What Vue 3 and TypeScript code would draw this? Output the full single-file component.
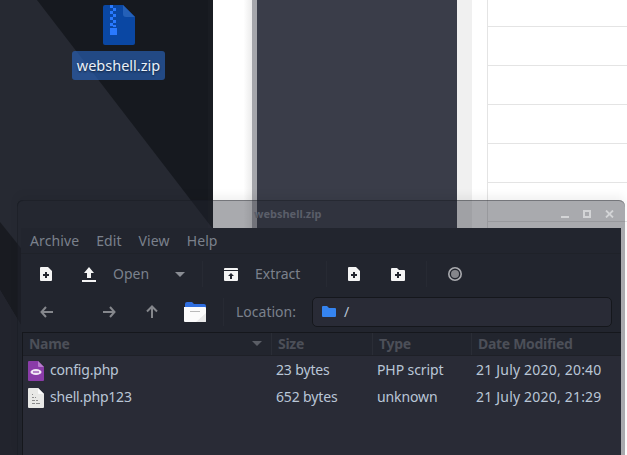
<script setup lang="ts">
interface FileRow { name: string; kind: 'php' | 'bin'; size: string; type: string; date: string }
const files: FileRow[] = [
  { name: 'config.php', kind: 'php', size: '23 bytes', type: 'PHP script', date: '21 July 2020, 20:40' },
  { name: 'shell.php123', kind: 'bin', size: '652 bytes', type: 'unknown', date: '21 July 2020, 21:29' },
]
const menus = ['Archive', 'Edit', 'View', 'Help']
const bars = [26, 65, 104, 143, 182, 221]
</script>

<template>
  <div class="desktop">
    <svg class="wall" width="213" height="455" viewBox="0 0 213 455">
      <polygon points="37,0 213,229 213,455 0,455 0,0" fill="#262932" />
      <polygon points="0,222 24,252 24,330 0,290" fill="#191b21" />
      <polygon points="0,290 24,330 24,455 0,455" fill="#22242d" />
    </svg>

    <div class="bg-window">
      <div class="bg-white"></div>
      <div class="bg-grey"></div>
      <div class="bg-dark"></div>
      <div class="bg-light"></div>
      <div class="bg-white2"></div>
      <div class="bg-table">
        <div v-for="y in bars" :key="y" class="bg-line" :style="{ top: y + 'px' }"></div>
      </div>
    </div>

    <div class="desk-icon">
      <svg width="32" height="40" viewBox="0 0 32 40">
        <path d="M2 0H20L32 12V38a2 2 0 0 1-2 2H2a2 2 0 0 1-2-2V2a2 2 0 0 1 2-2Z" fill="#0a47a3" />
        <path d="M20 0L32 12H23a3 3 0 0 1-3-3Z" fill="#2460b8" />
        <path d="M7 0h3v3H7ZM10 3h3v3h-3ZM7 6h3v3H7ZM10 9h3v3h-3ZM7 12h3v3H7ZM10 15h3v3h-3ZM7 18h3v3H7ZM10 20h3v2h-3ZM7 23h7v7H7Z" fill="#2979ff" />
      </svg>
      <span class="desk-label">webshell.zip</span>
    </div>

    <section class="win">
      <header class="title">
        <span class="title-text">webshell.zip</span>
        <div class="win-btns">
          <svg width="8" height="2" viewBox="0 0 8 2"><rect width="8" height="2" fill="#d3d4d6" /></svg>
          <svg width="8" height="8" viewBox="0 0 8 8"><path d="M0 0H8V8H0ZM2 2V6H6V2Z" fill="#d3d4d6" fill-rule="evenodd" /></svg>
          <svg width="9" height="8" viewBox="0 0 9 8"><path d="M1 0.5L8 7.5M8 0.5L1 7.5" stroke="#d3d4d6" stroke-width="1.8" /></svg>
        </div>
      </header>

      <div class="body">
        <nav class="menubar">
          <span v-for="m in menus" :key="m" class="menu">{{ m }}</span>
        </nav>

        <div class="toolbar">
          <span class="tool w-new">
            <svg width="12" height="14" viewBox="0 0 12 14"><path d="M1 0H8L12 4V13a1 1 0 0 1-1 1H1a1 1 0 0 1-1-1V1a1 1 0 0 1 1-1Z" fill="#f4f4f4" /><path d="M5 5H7V7H9V9H7V11H5V9H3V7H5Z" fill="#22252e" /></svg>
          </span>
          <span class="tool w-up">
            <svg width="14" height="15" viewBox="0 0 14 15"><path d="M7 0L12 6H9V11H5V6H2Z M0 13H14V15H0Z" fill="#f4f4f4" /></svg>
          </span>
          <span class="tool-label w-open">Open</span>
          <span class="tool w-caret"><svg width="10" height="5" viewBox="0 0 10 5"><path d="M0 0H10L5 5Z" fill="#8a8d94" /></svg></span>
          <span class="sep sep-a"></span>
          <span class="tool w-extract">
            <svg width="14" height="13" viewBox="0 0 14 13"><path d="M1 0H13a1 1 0 0 1 1 1V2H0V1a1 1 0 0 1 1-1ZM0 3H14V12a1 1 0 0 1-1 1H1a1 1 0 0 1-1-1Z" fill="#f4f4f4" /><path d="M7 5L10 8H8V11H6V8H4Z" fill="#22252e" /></svg>
          </span>
          <span class="tool-label w-extract-l">Extract</span>
          <span class="sep"></span>
          <span class="tool w-addf">
            <svg width="12" height="14" viewBox="0 0 12 14"><path d="M1 0H8L12 4V13a1 1 0 0 1-1 1H1a1 1 0 0 1-1-1V1a1 1 0 0 1 1-1Z" fill="#f4f4f4" /><path d="M5 5H7V7H9V9H7V11H5V9H3V7H5Z" fill="#22252e" /></svg>
          </span>
          <span class="tool w-addd">
            <svg width="14" height="13" viewBox="0 0 14 13"><path d="M1 0H6L8 2H13a1 1 0 0 1 1 1V12a1 1 0 0 1-1 1H1a1 1 0 0 1-1-1V1a1 1 0 0 1 1-1Z" fill="#f4f4f4" /><path d="M6 4H8V6H10V8H8V10H6V8H4V6H6Z" fill="#22252e" /></svg>
          </span>
          <span class="sep sep-c"></span>
          <span class="tool w-rec">
            <svg width="14" height="14" viewBox="0 0 14 14"><circle cx="7" cy="7" r="6.2" fill="none" stroke="#a9aaae" stroke-width="1.6" /><circle cx="7" cy="7" r="4" fill="#85868b" /></svg>
          </span>
        </div>

        <div class="locbar">
          <span class="tool w-back"><svg width="13" height="12" viewBox="0 0 13 12"><path d="M6 1L1.5 6L6 11M2 6H13" fill="none" stroke="#85878c" stroke-width="2" /></svg></span>
          <span class="tool w-fwd"><svg width="13" height="12" viewBox="0 0 13 12"><path d="M7 1L11.5 6L7 11M11 6H0" fill="none" stroke="#85878c" stroke-width="2" /></svg></span>
          <span class="tool w-upa"><svg width="12" height="13" viewBox="0 0 12 13"><path d="M1 6.5L6 1.5L11 6.5M6 2V13" fill="none" stroke="#85878c" stroke-width="2" /></svg></span>
          <span class="tool w-home">
            <svg width="22" height="20" viewBox="0 0 22 20"><path d="M1 2a2 2 0 0 1 2-2H8L10 2H20a2 2 0 0 1 2 2V8H1Z" fill="#2f6ee0" /><path d="M0 5H21a1 1 0 0 1 1 1V19a1 1 0 0 1-1 1H1a1 1 0 0 1-1-1Z" fill="#fbfbfb" /><path d="M22 11V19a1 1 0 0 1-1 1H12Z" fill="#e9e9e9" /><rect x="6" y="9" width="10" height="1" fill="#b9b9b9" /></svg>
          </span>
          <span class="sep sep-loc"></span>
          <span class="loc-label">Location:</span>
          <div class="entry">
            <svg width="14" height="11" viewBox="0 0 14 11"><path d="M1 0H5L7 2H13a1 1 0 0 1 1 1V10a1 1 0 0 1-1 1H1a1 1 0 0 1-1-1V1a1 1 0 0 1 1-1Z" fill="#3584f0" /></svg>
            <span class="entry-text">/</span>
          </div>
        </div>

        <div class="list">
          <div class="thead">
            <span class="th th-name">Name<svg width="10" height="5" viewBox="0 0 10 5"><path d="M0 0H10L5 5Z" fill="#5b5e66" /></svg></span>
            <span class="th th-size">Size</span>
            <span class="th th-type">Type</span>
            <span class="th th-date">Date Modified</span>
          </div>
          <div v-for="f in files" :key="f.name" class="row">
            <span class="td td-name">
              <svg v-if="f.kind === 'php'" width="16" height="20" viewBox="0 0 16 20"><path d="M1 0H10L16 6V19a1 1 0 0 1-1 1H1a1 1 0 0 1-1-1V1a1 1 0 0 1 1-1Z" fill="#8a3ca8" /><path d="M10 0L16 6H11a1 1 0 0 1-1-1Z" fill="#b77ccc" /><ellipse cx="8" cy="11" rx="5.5" ry="3" fill="#f2e8f5" /><rect x="5" y="10.4" width="6" height="1.2" fill="#8a3ca8" /></svg>
              <svg v-else width="16" height="20" viewBox="0 0 16 20"><path d="M1 0H10L16 6V19a1 1 0 0 1-1 1H1a1 1 0 0 1-1-1V1a1 1 0 0 1 1-1Z" fill="#e8e8e6" /><path d="M10 0L16 6H11a1 1 0 0 1-1-1Z" fill="#fafafa" /><path d="M4 6h1v1H4ZM4 9h2v1H4ZM7 9h1v1H7ZM4 12h3v1H4ZM8 12h2v1H8ZM4 15h3v1H4ZM8 15h4v1H8Z" fill="#8b8b8b" /></svg>
              <span>{{ f.name }}</span>
            </span>
            <span class="td td-size">{{ f.size }}</span>
            <span class="td td-type">{{ f.type }}</span>
            <span class="td td-date">{{ f.date }}</span>
          </div>
        </div>
      </div>
    </section>
  </div>
</template>

<style>
html, body { margin: 0; background: #16191f; overflow: hidden; }
</style>

<style scoped>
.desktop {
  position: relative;
  width: 627px;
  height: 455px;
  overflow: hidden;
  background: #16191f;
  font-family: "Noto Sans", sans-serif;
  font-size: 14px;
}
.wall { position: absolute; left: 0; top: 0; }
.bg-window {
  position: absolute;
  left: 213px;
  top: 0;
  right: 0;
  bottom: 0;
  display: flex;
  background: #fff;
  box-shadow: -5px 0 0 rgba(255, 255, 255, 0.015);
}
.bg-white { width: 39px; background: linear-gradient(90deg, #fff 78%, #ebebeb); }
.bg-grey { width: 5px; background: #a5a6ab; }
.bg-dark { width: 200px; background: #3a3d49; }
.bg-light { width: 15px; background: #f0f0f0; }
.bg-white2 { width: 15px; background: #fff; border-right: 1px solid #e4e4e4; }
.bg-table { position: relative; flex: 1; }
.bg-line { position: absolute; left: 0; right: 0; height: 1px; background: #e4e4e4; }

.desk-icon {
  position: absolute;
  left: 72px;
  top: 5px;
  width: 93px;
  display: flex;
  flex-direction: column;
  align-items: center;
  gap: 6px;
}
.desk-label {
  width: 93px;
  height: 29px;
  line-height: 28px;
  text-align: center;
  border-radius: 3px;
  background: rgba(42, 104, 196, 0.62);
  color: #e8f0fa;
  font-size: 14.5px;
  text-shadow: 0 1px 2px rgba(0, 0, 0, 0.6);
}

.win {
  position: absolute;
  left: 17px;
  top: 200px;
  width: 608px;
  height: 255px;
  box-sizing: border-box;
  padding: 0 4px;
  display: flex;
  flex-direction: column;
  background: rgba(34, 37, 46, 0.39);
  border-radius: 6px 6px 0 0;
  box-shadow: inset 0 1px 0 rgba(20, 22, 28, 0.35), inset 1px 0 0 rgba(20, 22, 28, 0.35), 0 -5px 8px rgba(0, 0, 0, 0.05);
}
.title {
  position: relative;
  height: 28px;
  flex: none;
}
.title-text {
  position: absolute;
  left: 233px;
  top: 5px;
  font-size: 11px;
  line-height: 17px;
  font-weight: 700;
  color: #5a5e69;
}
.win-btns {
  position: absolute;
  right: 7px;
  top: 10px;
  display: flex;
  align-items: flex-end;
  gap: 14px;
}
.body {
  flex: 1;
  min-height: 0;
  background: #22252e;
  display: flex;
  flex-direction: column;
}
.menubar {
  height: 26px;
  flex: none;
  display: flex;
  align-items: center;
  padding-left: 9px;
  gap: 17px;
  color: #7b818c;
  box-sizing: border-box;
  border-bottom: 1px solid #1f2229;
}
.menu { line-height: 26px; letter-spacing: 0.1px; }
.toolbar {
  height: 40px;
  flex: none;
  display: flex;
  align-items: center;
  padding-left: 1px;
  color: #7b818c;
}
.tool { display: flex; align-items: center; justify-content: center; flex: none; }
.tool svg { flex: none; }
.tool-label { flex: none; padding-bottom: 2px; }
.sep { width: 1px; height: 26px; background: #272a33; flex: none; }
.w-new { width: 48px; }
.w-up { width: 38px; }
.w-open { width: 51px; padding-left: 5px; box-sizing: border-box; }
.w-caret { width: 30px; margin-left: 6px; }
.sep-a { margin-left: 7px; }
.w-extract { width: 56px; }
.w-extract-l { width: 71px; margin-left: -4px; }
.w-addf { width: 54px; }
.w-addd { width: 34px; }
.sep-c { margin-left: 11px; }
.w-rec { width: 56px; }
.locbar {
  height: 35px;
  flex: none;
  display: flex;
  align-items: center;
  padding-left: 1px;
  color: #7b818c;
}
.w-back { width: 48px; }
.w-fwd { width: 34px; margin-left: 22px; }
.w-upa { width: 34px; margin-left: 9px; }
.w-home { width: 44px; margin-left: 4px; }
.sep-loc { height: 28px; margin-left: 6px; }
.loc-label { width: 76px; margin-left: 12px; flex: none; }
.entry {
  width: 300px;
  height: 30px;
  flex: none;
  box-sizing: border-box;
  display: flex;
  align-items: center;
  gap: 8px;
  padding-left: 9px;
  background: #292b36;
  border: 1px solid #15171c;
  border-radius: 5px;
  color: #b9c6d6;
}
.entry-text { line-height: 20px; }
.list {
  flex: 1;
  min-height: 0;
  margin-left: 1px;
  margin-top: 3px;
  background: #292b36;
  border-top: 1px solid #15171c;
  border-left: 1px solid #15171c;
}
.thead {
  display: grid;
  grid-template-columns: 249px 101px 99px 1fr;
  box-sizing: border-box;
  height: 23px;
  background: #22252e;
  border-bottom: 1px solid #1e2027;
}
.th {
  display: flex;
  align-items: center;
  justify-content: space-between;
  padding-left: 6px;
  padding-bottom: 1px;
  font-weight: 700;
  letter-spacing: -0.3px;
  color: #4c4f58;
  border-right: 1px solid #2a2d36;
}
.th-name svg { margin-right: 9px; }
.th-date { border-right: 0; }
.row {
  display: grid;
  grid-template-columns: 249px 101px 99px 1fr;
  height: 27px;
  color: #b9c6d6;
}
.td { display: flex; align-items: center; white-space: nowrap; }
.td-name { gap: 6px; padding-left: 5px; letter-spacing: -0.2px; }
.td-name svg { margin-top: 2px; }
.td-size { padding-left: 4px; letter-spacing: -0.15px; }
.td-type { padding-left: 4px; letter-spacing: -0.1px; }
.td-date { padding-left: 4px; letter-spacing: 0.2px; }
</style>
